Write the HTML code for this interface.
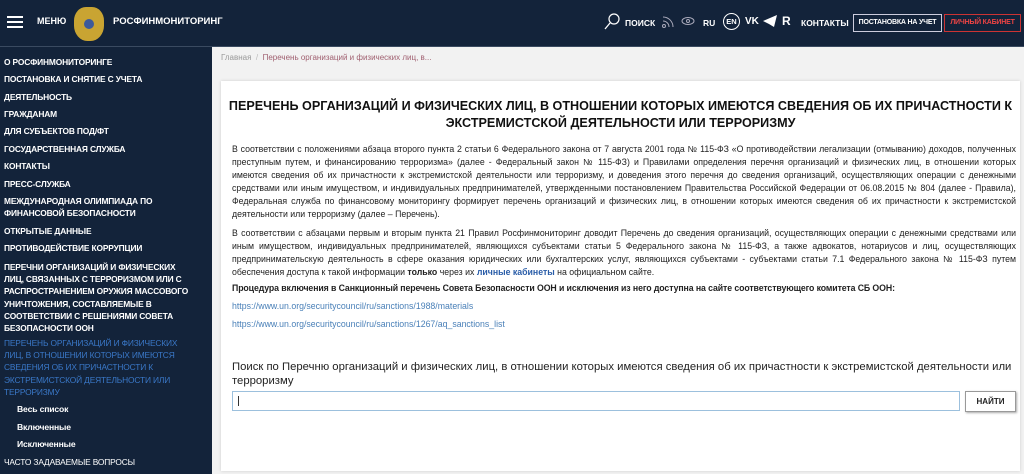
<!DOCTYPE html>
<html><head><meta charset="utf-8"><style>
*{margin:0;padding:0;box-sizing:border-box}
body{width:1024px;height:474px;overflow:hidden;background:#f2f2f2;font-family:"Liberation Sans","DejaVu Sans",sans-serif;position:relative}
.hdr{position:absolute;left:0;top:0;width:1024px;height:47px;background:#13233a;border-bottom:1px solid #3a4a60;color:#fff}
.side{position:absolute;left:0;top:0;width:212px;height:474px;background:#13233a;color:#fff;font-size:8.4px;font-weight:bold;letter-spacing:-0.15px}
.side div{position:absolute;left:4px;width:192px;line-height:12.2px}
.side .sub{left:17px;text-transform:none;font-size:8.6px}
.card{position:absolute;left:221px;top:81px;width:799px;height:390px;background:#fff;box-shadow:0 0 3px rgba(0,0,0,.15)}
.t{position:absolute;font-size:8.75px;color:#222;line-height:13.1px;text-align:justify;left:232px;width:784px}
a{color:#2a5da8}
.hdr div{white-space:nowrap}
</style></head><body>
<div class="side">
<div style="top:56px">О РОСФИНМОНИТОРИНГЕ</div>
<div style="top:73px">ПОСТАНОВКА И СНЯТИЕ С УЧЕТА</div>
<div style="top:91px">ДЕЯТЕЛЬНОСТЬ</div>
<div style="top:108px">ГРАЖДАНАМ</div>
<div style="top:125px">ДЛЯ СУБЪЕКТОВ ПОД/ФТ</div>
<div style="top:143px">ГОСУДАРСТВЕННАЯ СЛУЖБА</div>
<div style="top:160px">КОНТАКТЫ</div>
<div style="top:178px">ПРЕСС-СЛУЖБА</div>
<div style="top:195px">МЕЖДУНАРОДНАЯ ОЛИМПИАДА ПО ФИНАНСОВОЙ БЕЗОПАСНОСТИ</div>
<div style="top:225px">ОТКРЫТЫЕ ДАННЫЕ</div>
<div style="top:242px">ПРОТИВОДЕЙСТВИЕ КОРРУПЦИИ</div>
<div style="top:261px">ПЕРЕЧНИ ОРГАНИЗАЦИЙ И ФИЗИЧЕСКИХ ЛИЦ, СВЯЗАННЫХ С ТЕРРОРИЗМОМ ИЛИ С РАСПРОСТРАНЕНИЕМ ОРУЖИЯ МАССОВОГО УНИЧТОЖЕНИЯ, СОСТАВЛЯЕМЫЕ В СООТВЕТСТВИИ С РЕШЕНИЯМИ СОВЕТА БЕЗОПАСНОСТИ ООН</div>
<div style="top:337px;color:#3a78c8;font-weight:normal;width:185px">ПЕРЕЧЕНЬ ОРГАНИЗАЦИЙ И ФИЗИЧЕСКИХ ЛИЦ, В ОТНОШЕНИИ КОТОРЫХ ИМЕЮТСЯ СВЕДЕНИЯ ОБ ИХ ПРИЧАСТНОСТИ К ЭКСТРЕМИСТСКОЙ ДЕЯТЕЛЬНОСТИ ИЛИ ТЕРРОРИЗМУ</div>
<div class="sub" style="top:403px">Весь список</div>
<div class="sub" style="top:421px">Включенные</div>
<div class="sub" style="top:438px">Исключенные</div>
<div style="top:456px;font-weight:normal">ЧАСТО ЗАДАВАЕМЫЕ ВОПРОСЫ</div>
</div>
<div class="hdr">
<div style="position:absolute;left:7px;top:16px;width:16px;height:2px;background:#fff;box-shadow:0 5px 0 #fff,0 10px 0 #fff"></div>
<div style="position:absolute;left:37px;top:16px;font-size:9px;font-weight:bold">МЕНЮ</div>
<div style="position:absolute;left:74px;top:7px;width:30px;height:34px;border-radius:40% 40% 45% 45%;background:#c9a432"><div style="position:absolute;left:10px;top:12px;width:10px;height:10px;border-radius:50%;background:#3d5a9a"></div></div>
<div style="position:absolute;left:113px;top:16px;font-size:9.5px;font-weight:bold">РОСФИНМОНИТОРИНГ</div>
<svg style="position:absolute;left:604px;top:13px" width="16" height="18"><circle cx="10" cy="6" r="5" stroke="#fff" stroke-width="1.2" fill="none"/><line x1="6" y1="10" x2="1" y2="16" stroke="#fff" stroke-width="1.3"/></svg>
<div style="position:absolute;left:625px;top:18px;font-size:8.5px;font-weight:bold">ПОИСК</div>
<svg style="position:absolute;left:661px;top:13px" width="14" height="16" fill="none" stroke="#aab"><circle cx="3" cy="13" r="1.5"/><path d="M2 8a6 6 0 0 1 6 6M2 4a10 10 0 0 1 10 10"/></svg>
<svg style="position:absolute;left:681px;top:16px" width="14" height="10" fill="none" stroke="#aab"><ellipse cx="7" cy="5" rx="6" ry="3.5"/><circle cx="7" cy="5" r="1.5"/></svg>
<div style="position:absolute;left:703px;top:18px;font-size:8.5px;font-weight:bold">RU</div>
<div style="position:absolute;left:723px;top:13px;width:17px;height:17px;border:1px solid #fff;border-radius:50%;font-size:7.5px;font-weight:bold;text-align:center;line-height:15px">EN</div>
<div style="position:absolute;left:745px;top:16px;font-size:10px;font-weight:bold">VK</div>
<svg style="position:absolute;left:763px;top:15px" width="14" height="12"><path d="M0 6 L14 0 L11 12 L6 9 Z" fill="#fff"/></svg>
<div style="position:absolute;left:782px;top:14px;font-size:12px;font-weight:bold">R</div>
<div style="position:absolute;left:801px;top:18px;font-size:8.5px;font-weight:bold">КОНТАКТЫ</div>
<div style="position:absolute;left:853px;top:14px;width:89px;height:18px;border:1px solid #ccd;font-size:7px;font-weight:bold;line-height:16px;text-align:center;letter-spacing:-0.2px">ПОСТАНОВКА НА УЧЕТ</div>
<div style="position:absolute;left:944px;top:14px;width:77px;height:18px;border:1px solid #c33;color:#e44;font-size:7px;font-weight:bold;line-height:16px;text-align:center;letter-spacing:-0.2px">ЛИЧНЫЙ КАБИНЕТ</div>
</div>
<div style="position:absolute;left:221px;top:53px;font-size:8px;color:#a06070"><span style="color:#999">Главная</span> <span style="color:#bbb">&nbsp;/&nbsp;</span> Перечень организаций и физических лиц, в...</div>
<div class="card"></div>
<div style="position:absolute;left:221px;top:98px;width:799px;text-align:center;font-size:12.6px;font-weight:bold;line-height:17px;color:#111">ПЕРЕЧЕНЬ ОРГАНИЗАЦИЙ И ФИЗИЧЕСКИХ ЛИЦ, В ОТНОШЕНИИ КОТОРЫХ ИМЕЮТСЯ СВЕДЕНИЯ ОБ ИХ ПРИЧАСТНОСТИ К ЭКСТРЕМИСТСКОЙ ДЕЯТЕЛЬНОСТИ ИЛИ ТЕРРОРИЗМУ</div>
<div class="t" style="top:143px">В соответствии с положениями абзаца второго пункта 2 статьи 6 Федерального закона от 7 августа 2001 года № 115-ФЗ «О противодействии легализации (отмыванию) доходов, полученных преступным путем, и финансированию терроризма» (далее - Федеральный закон № 115-ФЗ) и Правилами определения перечня организаций и физических лиц, в отношении которых имеются сведения об их причастности к экстремистской деятельности или терроризму, и доведения этого перечня до сведения организаций, осуществляющих операции с денежными средствами или иным имуществом, и индивидуальных предпринимателей, утвержденными постановлением Правительства Российской Федерации от 06.08.2015 № 804 (далее - Правила), Федеральная служба по финансовому мониторингу формирует перечень организаций и физических лиц, в отношении которых имеются сведения об их причастности к экстремистской деятельности или терроризму (далее – Перечень).</div>
<div class="t" style="top:227px">В соответствии с абзацами первым и вторым пункта 21 Правил Росфинмониторинг доводит Перечень до сведения организаций, осуществляющих операции с денежными средствами или иным имуществом, индивидуальных предпринимателей, являющихся субъектами статьи 5 Федерального закона № 115-ФЗ, а также адвокатов, нотариусов и лиц, осуществляющих предпринимательскую деятельность в сфере оказания юридических или бухгалтерских услуг, являющихся субъектами - субъектами статьи 7.1 Федерального закона № 115-ФЗ путем обеспечения доступа к такой информации <b>только</b> через их <a><b>личные кабинеты</b></a> на официальном сайте.</div>
<div class="t" style="top:282px;font-weight:bold;letter-spacing:-0.1px">Процедура включения в Санкционный перечень Совета Безопасности ООН и исключения из него доступна на сайте соответствующего комитета СБ ООН:</div>
<div class="t" style="top:300px;color:#4a80b8">https://www.un.org/securitycouncil/ru/sanctions/1988/materials</div>
<div class="t" style="top:318px;color:#4a80b8">https://www.un.org/securitycouncil/ru/sanctions/1267/aq_sanctions_list</div>
<div style="position:absolute;left:232px;top:360px;width:780px;font-size:11.3px;line-height:14px;color:#222">Поиск по Перечню организаций и физических лиц, в отношении которых имеются сведения об их причастности к экстремистской деятельности или терроризму</div>
<div style="position:absolute;left:232px;top:391px;width:728px;height:20px;border:1px solid #9cc0dd"><div style="position:absolute;left:5px;top:4px;width:1px;height:10px;background:#333"></div></div>
<div style="position:absolute;left:965px;top:391px;width:51px;height:21px;border:1px solid #999;box-shadow:1px 1px 2px #aaa;font-size:8px;font-weight:bold;text-align:center;line-height:19px;color:#222">НАЙТИ</div>
</body></html>
